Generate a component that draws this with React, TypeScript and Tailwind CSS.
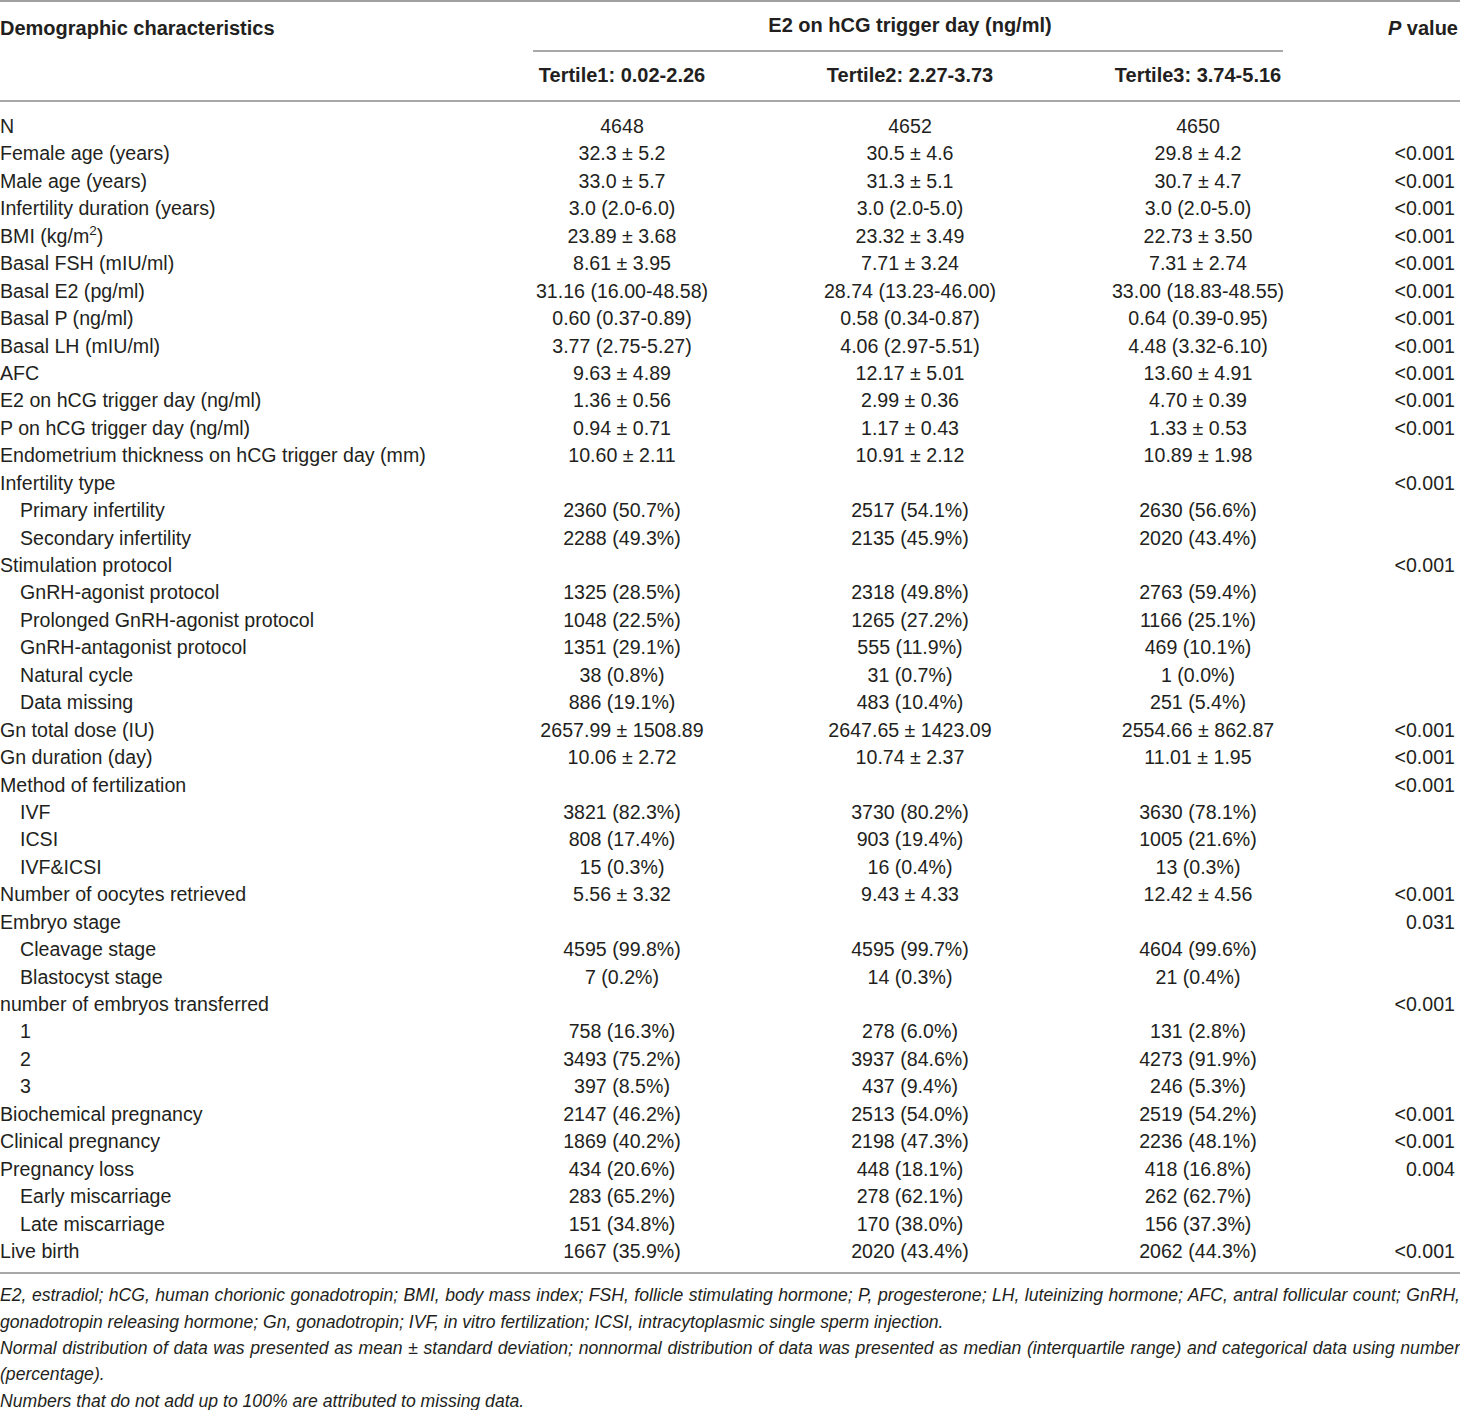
type Row = [string, string, string, string, string, boolean?];

const rows: Row[] = [
  ["N", "4648", "4652", "4650", ""],
  ["Female age (years)", "32.3 ± 5.2", "30.5 ± 4.6", "29.8 ± 4.2", "<0.001"],
  ["Male age (years)", "33.0 ± 5.7", "31.3 ± 5.1", "30.7 ± 4.7", "<0.001"],
  ["Infertility duration (years)", "3.0 (2.0-6.0)", "3.0 (2.0-5.0)", "3.0 (2.0-5.0)", "<0.001"],
  ["BMI", "23.89 ± 3.68", "23.32 ± 3.49", "22.73 ± 3.50", "<0.001"],
  ["Basal FSH (mIU/ml)", "8.61 ± 3.95", "7.71 ± 3.24", "7.31 ± 2.74", "<0.001"],
  ["Basal E2 (pg/ml)", "31.16 (16.00-48.58)", "28.74 (13.23-46.00)", "33.00 (18.83-48.55)", "<0.001"],
  ["Basal P (ng/ml)", "0.60 (0.37-0.89)", "0.58 (0.34-0.87)", "0.64 (0.39-0.95)", "<0.001"],
  ["Basal LH (mIU/ml)", "3.77 (2.75-5.27)", "4.06 (2.97-5.51)", "4.48 (3.32-6.10)", "<0.001"],
  ["AFC", "9.63 ± 4.89", "12.17 ± 5.01", "13.60 ± 4.91", "<0.001"],
  ["E2 on hCG trigger day (ng/ml)", "1.36 ± 0.56", "2.99 ± 0.36", "4.70 ± 0.39", "<0.001"],
  ["P on hCG trigger day (ng/ml)", "0.94 ± 0.71", "1.17 ± 0.43", "1.33 ± 0.53", "<0.001"],
  ["Endometrium thickness on hCG trigger day (mm)", "10.60 ± 2.11", "10.91 ± 2.12", "10.89 ± 1.98", ""],
  ["Infertility type", "", "", "", "<0.001"],
  ["Primary infertility", "2360 (50.7%)", "2517 (54.1%)", "2630 (56.6%)", "", true],
  ["Secondary infertility", "2288 (49.3%)", "2135 (45.9%)", "2020 (43.4%)", "", true],
  ["Stimulation protocol", "", "", "", "<0.001"],
  ["GnRH-agonist protocol", "1325 (28.5%)", "2318 (49.8%)", "2763 (59.4%)", "", true],
  ["Prolonged GnRH-agonist protocol", "1048 (22.5%)", "1265 (27.2%)", "1166 (25.1%)", "", true],
  ["GnRH-antagonist protocol", "1351 (29.1%)", "555 (11.9%)", "469 (10.1%)", "", true],
  ["Natural cycle", "38 (0.8%)", "31 (0.7%)", "1 (0.0%)", "", true],
  ["Data missing", "886 (19.1%)", "483 (10.4%)", "251 (5.4%)", "", true],
  ["Gn total dose (IU)", "2657.99 ± 1508.89", "2647.65 ± 1423.09", "2554.66 ± 862.87", "<0.001"],
  ["Gn duration (day)", "10.06 ± 2.72", "10.74 ± 2.37", "11.01 ± 1.95", "<0.001"],
  ["Method of fertilization", "", "", "", "<0.001"],
  ["IVF", "3821 (82.3%)", "3730 (80.2%)", "3630 (78.1%)", "", true],
  ["ICSI", "808 (17.4%)", "903 (19.4%)", "1005 (21.6%)", "", true],
  ["IVF&ICSI", "15 (0.3%)", "16 (0.4%)", "13 (0.3%)", "", true],
  ["Number of oocytes retrieved", "5.56 ± 3.32", "9.43 ± 4.33", "12.42 ± 4.56", "<0.001"],
  ["Embryo stage", "", "", "", "0.031"],
  ["Cleavage stage", "4595 (99.8%)", "4595 (99.7%)", "4604 (99.6%)", "", true],
  ["Blastocyst stage", "7 (0.2%)", "14 (0.3%)", "21 (0.4%)", "", true],
  ["number of embryos transferred", "", "", "", "<0.001"],
  ["1", "758 (16.3%)", "278 (6.0%)", "131 (2.8%)", "", true],
  ["2", "3493 (75.2%)", "3937 (84.6%)", "4273 (91.9%)", "", true],
  ["3", "397 (8.5%)", "437 (9.4%)", "246 (5.3%)", "", true],
  ["Biochemical pregnancy", "2147 (46.2%)", "2513 (54.0%)", "2519 (54.2%)", "<0.001"],
  ["Clinical pregnancy", "1869 (40.2%)", "2198 (47.3%)", "2236 (48.1%)", "<0.001"],
  ["Pregnancy loss", "434 (20.6%)", "448 (18.1%)", "418 (16.8%)", "0.004"],
  ["Early miscarriage", "283 (65.2%)", "278 (62.1%)", "262 (62.7%)", "", true],
  ["Late miscarriage", "151 (34.8%)", "170 (38.0%)", "156 (37.3%)", "", true],
  ["Live birth", "1667 (35.9%)", "2020 (43.4%)", "2062 (44.3%)", "<0.001"],
];

const cols = "grid grid-cols-[478px_288px_288px_288px_118px]";

export default function App() {
  return (
    <div className="w-[1460px] bg-white text-[#231f20] text-[19.6px] font-['Liberation_Sans',Arial,sans-serif]">
      {/* Header */}
      <div className={`${cols} border-t-2 border-[#a0a0a0] text-[20px]`}>
        <div className="row-span-2 pt-[13px] font-bold leading-[26px]">Demographic characteristics</div>
        <div className="col-span-3 h-[48px] flex items-center justify-center font-bold pb-[2px]">
          E2 on hCG trigger day (ng/ml)
        </div>
        <div className="row-span-2 pt-[13px] text-right font-bold leading-[26px] pr-[2px]">
          <span className="italic">P</span> value
        </div>
        <div className="col-span-3 ml-[55px] mr-[59px] border-t-2 border-[#a8a8a8]" />
      </div>
      <div className={`${cols} border-b-2 border-[#a8a8a8] -mt-[2px] text-[20px]`}>
        <div />
        <div className="h-[50px] flex items-center justify-center font-bold">Tertile1: 0.02-2.26</div>
        <div className="h-[50px] flex items-center justify-center font-bold">Tertile2: 2.27-3.73</div>
        <div className="h-[50px] flex items-center justify-center font-bold">Tertile3: 3.74-5.16</div>
        <div />
      </div>

      {/* Body */}
      <div className="pt-[11px] pb-[7px] border-b-2 border-[#a8a8a8]">
        {rows.map(([label, a, b, c, p, indent], i) => (
          <div key={i} className={`${cols} h-[27.44px] leading-[27.44px] whitespace-nowrap`}>
            <div className={indent ? "pl-[20px]" : ""}>
              {label === "BMI" ? (
                <>
                  BMI (kg/m<sup className="text-[13.5px] -top-[8px]">2</sup>)
                </>
              ) : (
                label
              )}
            </div>
            <div className="text-center">{a}</div>
            <div className="text-center">{b}</div>
            <div className="text-center">{c}</div>
            <div className="text-right pr-[5px]">{p}</div>
          </div>
        ))}
      </div>

      {/* Footnotes */}
      <div className="pt-[8px] italic text-[17.6px] leading-[26.3px] text-justify">
        <p>
          E2, estradiol; hCG, human chorionic gonadotropin; BMI, body mass index; FSH, follicle stimulating
          hormone; P, progesterone; LH, luteinizing hormone; AFC, antral follicular count; GnRH, gonadotropin
          releasing hormone; Gn, gonadotropin; IVF, in vitro fertilization; ICSI, intracytoplasmic single sperm
          injection.
        </p>
        <p>
          Normal distribution of data was presented as mean ± standard deviation; nonnormal distribution of data
          was presented as median (interquartile range) and categorical data using number (percentage).
        </p>
        <p>Numbers that do not add up to 100% are attributed to missing data.</p>
      </div>
    </div>
  );
}
